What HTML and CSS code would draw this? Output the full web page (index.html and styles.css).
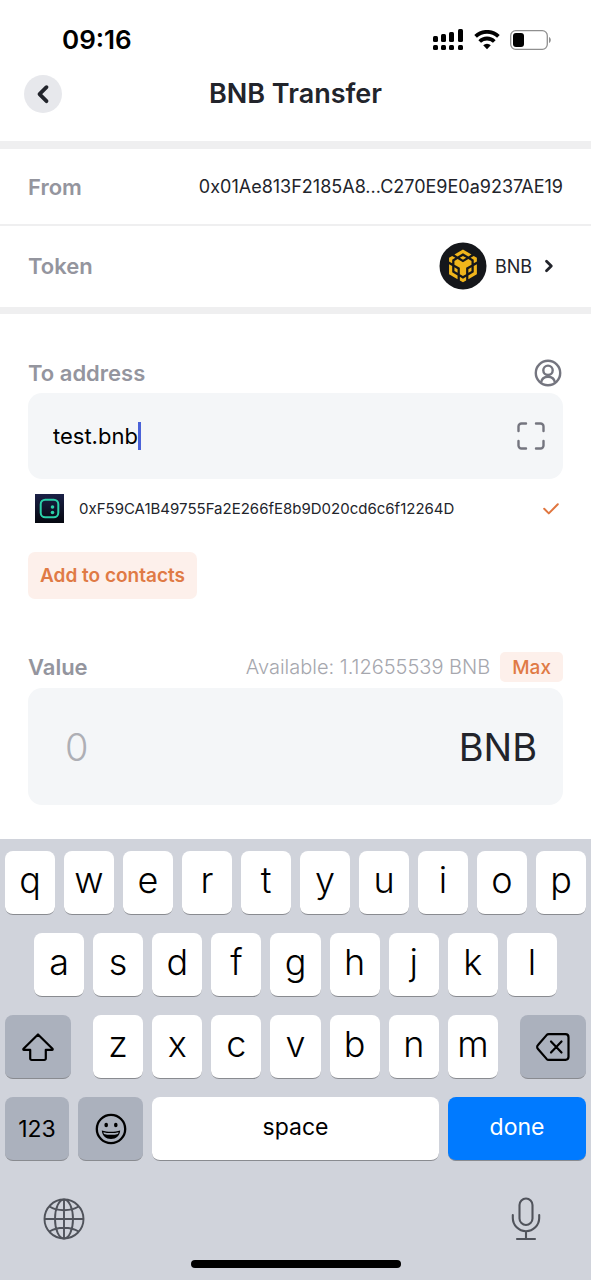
FILE: index.html
```html
<!DOCTYPE html>
<html lang="en">
<head>
<meta charset="utf-8">
<meta name="viewport" content="width=device-width, initial-scale=1">
<title>BNB Transfer</title>
<link rel="stylesheet" href="styles.css">
</head>
<body>
<div class="screen">
  <div class="status">
    <time class="clock">09:16</time>
    <div class="indicators">
      <svg width="31" height="22" viewBox="0 0 31 22" aria-hidden="true">
        <rect x="0" y="7" width="5" height="6" rx="1.5"/><rect x="8" y="5" width="5" height="8" rx="1.5"/><rect x="16" y="3" width="5" height="10" rx="1.5"/><rect x="25" y="0" width="5" height="13" rx="1.5"/>
        <rect x="0" y="16" width="5" height="5" rx="1.5"/><rect x="8" y="16" width="5" height="5" rx="1.5"/><rect x="16" y="16" width="5" height="5" rx="1.5"/><rect x="25" y="16" width="5" height="5" rx="1.5"/>
      </svg>
      <svg width="26" height="20" viewBox="0 0 26 20" aria-hidden="true">
        <path d="M1.600 6.400a16.500 16.500 0 0 1 22.800 0M5.700 11.500a10.400 10.400 0 0 1 14.600 0" fill="none" stroke="#000" stroke-width="3.800"/>
        <path d="M13 19.200l-3.800-3.900a5.400 5.400 0 0 1 7.600 0z"/>
      </svg>
      <svg width="42" height="20" viewBox="0 0 42 20" aria-hidden="true">
        <rect x=".7" y=".7" width="36.600" height="18.600" rx="5" fill="none" stroke="#8f8f8f" stroke-width="1.300"/>
        <rect x="3" y="3" width="11" height="14" rx="3"/>
        <path d="M39 7v6c2.400-1.300 2.400-4.700 0-6z" fill="#8f8f8f"/>
      </svg>
    </div>
  </div>

  <header class="header">
    <button class="back" aria-label="Back">
      <svg width="38" height="38" viewBox="0 0 38 38" aria-hidden="true"><path d="M22.500 12.200L15.500 19.200l7 7" fill="none" stroke="#22242b" stroke-width="3.800" stroke-linecap="round" stroke-linejoin="round"/></svg>
    </button>
    <h1 class="title">BNB Transfer</h1>
  </header>

  <main>
    <section class="details">
      <div class="row row-from">
        <span class="label">From</span>
        <span class="from-address">0x01Ae813F2185A8...C270E9E0a9237AE19</span>
      </div>
      <div class="row row-token">
        <span class="label">Token</span>
        <button class="token">
          <svg width="48" height="48" viewBox="0 0 48 48" aria-hidden="true">
            <circle cx="24" cy="24" r="23.500" fill="#15171b"/>
            <path transform="scale(.0192)" fill="#f0b51b" d="M685.9 1250l.9 330 280.400 165v193.200L522.700 1677.500v-524L685.900 1250zM685.900 920v192.300l-163.300-96.600V823.400l163.300-96.600 164.100 96.600L685.900 920zM1085.700 823.400l163.300-96.600 164.100 96.600-164 96.600zM803.900 1509.600v-193.200l163.300 96.600v192.300zM1085.700 1812.200l163.300 96.600 164.100-96.600v192.300l-164.100 96.600-163.300-96.600zM1645.900 823.400l163.300-96.600 164.100 96.600v192.300l-164.100 96.600V920zM1809.200 1580l.9-330 163.300-96.600v524l-444.500 260.700v-193.200zM1692.100 1509.600l-163.300 95.700V1413l163.300-96.600zM1692.100 986.400l.9 193.200-281.200 165v330.800l-163.300 95.700-163.300-95.700v-330.800l-281.200-165V986.400L968 889.800l279.500 165.800 281.200-165.800 164.100 96.600zM803.900 656.500l443.700-261.600 444.500 261.600-163.300 96.600-281.200-165.800-280.400 165.800z"/>
          </svg>
          <span>BNB</span>
          <svg width="10" height="14" viewBox="0 0 10 14" aria-hidden="true"><path d="M2.500 2.200L7.300 7l-4.800 4.800" fill="none" stroke="#22242b" stroke-width="2.800" stroke-linecap="round" stroke-linejoin="round"/></svg>
        </button>
      </div>
    </section>

    <form class="form">
      <div class="field-head">
        <label class="label" for="to">To address</label>
        <button class="icon-button" type="button" aria-label="Contacts">
          <svg width="28" height="28" viewBox="0 0 28 28" fill="none" stroke="#74757f" stroke-width="2.400" aria-hidden="true"><circle cx="14" cy="14" r="12.200"/><circle cx="14" cy="11.300" r="4.700"/><path d="M7 23.500c.6-3.400 3.300-5.800 7-5.800s6.400 2.400 7 5.800"/></svg>
        </button>
      </div>
      <div class="box box-address">
        <div class="entry">
          <input class="address-input" id="to" type="text" value="test.bnb" size="8" autocomplete="off" spellcheck="false">
          <span class="caret"></span>
        </div>
        <button class="icon-button" type="button" aria-label="Scan code">
          <svg width="28" height="28" viewBox="0 0 28 28" fill="none" stroke="#74757f" stroke-width="2.400" stroke-linecap="round" aria-hidden="true"><path d="M1.500 9V4.500a3 3 0 0 1 3-3H9M19 1.500h4.500a3 3 0 0 1 3 3V9M26.500 19v4.500a3 3 0 0 1-3 3H19M9 26.500H4.500a3 3 0 0 1-3-3V19"/></svg>
        </button>
      </div>
      <div class="resolved">
        <svg width="29" height="29" viewBox="0 0 29 29" aria-hidden="true">
          <defs><linearGradient id="night" x2="0" y2="1"><stop stop-color="#1b2147"/><stop offset="1" stop-color="#05070f"/></linearGradient></defs>
          <rect width="29" height="29" fill="url(#night)"/>
          <rect x="5.700" y="5.700" width="17.600" height="17.600" rx="4.500" fill="none" stroke="#2bd0a8" stroke-width="2"/>
          <circle cx="17.500" cy="13" r="1.800" fill="#2bd0a8"/><circle cx="17.500" cy="18.500" r="1.800" fill="#2bd0a8"/>
        </svg>
        <span class="resolved-address">0xF59CA1B49755Fa2E266fE8b9D020cd6c6f12264D</span>
        <svg width="16" height="12" viewBox="0 0 16 12" aria-hidden="true"><path d="M1.200 5.800l4.600 4.600L14.800 1.300" fill="none" stroke="#e0763f" stroke-width="2" stroke-linecap="round" stroke-linejoin="round"/></svg>
      </div>
      <button class="add" type="button">Add to contacts</button>

      <div class="field-head">
        <label class="label" for="value">Value</label>
        <div class="balance">
          <span class="available">Available: 1.12655539 BNB</span>
          <button class="max" type="button">Max</button>
        </div>
      </div>
      <div class="box box-value">
        <input class="value-input" id="value" type="text" inputmode="decimal" placeholder="0">
        <span class="unit">BNB</span>
      </div>
    </form>
  </main>

  <div class="keyboard">
    <div class="keys keys-top">
      <button class="key">q</button><button class="key">w</button><button class="key">e</button><button class="key">r</button><button class="key">t</button><button class="key">y</button><button class="key">u</button><button class="key">i</button><button class="key">o</button><button class="key">p</button>
    </div>
    <div class="keys keys-home">
      <button class="key">a</button><button class="key">s</button><button class="key">d</button><button class="key">f</button><button class="key">g</button><button class="key">h</button><button class="key">j</button><button class="key">k</button><button class="key">l</button>
    </div>
    <div class="keys keys-lower">
      <button class="key key-dark" aria-label="Shift">
        <svg width="34" height="30" viewBox="0 0 34 30" aria-hidden="true"><path d="M17 2.500L31.500 16.800c.4.500.2 1-.4 1h-6.300v8.700a1.500 1.500 0 0 1-1.500 1.500H10.700a1.500 1.500 0 0 1-1.500-1.500v-8.700H2.900c-.6 0-.8-.5-.4-1z" fill="none" stroke="#000" stroke-width="2.200" stroke-linejoin="round"/></svg>
      </button>
      <div class="keys keys-letters">
        <button class="key">z</button><button class="key">x</button><button class="key">c</button><button class="key">v</button><button class="key">b</button><button class="key">n</button><button class="key">m</button>
      </div>
      <button class="key key-dark" aria-label="Delete">
        <svg width="34" height="28" viewBox="0 0 34 28" fill="none" stroke="#000" stroke-width="2.200" stroke-linejoin="round" stroke-linecap="round" aria-hidden="true"><path d="M12.800 1.200h16.700a3 3 0 0 1 3 3v19.600a3 3 0 0 1-3 3H12.800a3 3 0 0 1-2.200-.9L2 16a2.800 2.800 0 0 1 0-4l8.600-9.900a3 3 0 0 1 2.200-.9zM15 8.500L25.500 19.500M25.500 8.500L15 19.500"/></svg>
      </button>
    </div>
    <div class="keys keys-bottom">
      <button class="key key-dark key-word">123</button>
      <button class="key key-dark" aria-label="Emoji">
        <svg width="32" height="32" viewBox="0 0 32 32" aria-hidden="true"><circle cx="16" cy="16" r="14.200" fill="none" stroke="#000" stroke-width="2.300"/><ellipse cx="11.200" cy="12" rx="1.800" ry="2.300"/><ellipse cx="20.800" cy="12" rx="1.800" ry="2.300"/><path d="M6.800 17.500c2.800.9 6 1.300 9.200 1.300s6.400-.4 9.200-1.300c-.3 5-4.200 8.500-9.200 8.500s-8.900-3.500-9.200-8.500z"/><path d="M8.300 19.200c2.300.6 5 .9 7.700.9s5.400-.3 7.700-.9l-.7 1.700c-2 .6-4.400.9-7 .9s-5-.3-7-.9z" fill="#abb1bd"/></svg>
      </button>
      <button class="key key-word">space</button>
      <button class="key key-word key-done">done</button>
    </div>
    <div class="tools">
      <button class="icon-button" aria-label="Next keyboard">
        <svg width="42" height="42" viewBox="0 0 42 42" fill="none" stroke="#50535b" stroke-width="1.900" aria-hidden="true"><circle cx="21" cy="21" r="19.500"/><ellipse cx="21" cy="21" rx="9" ry="19.500"/><path d="M21 1.500v39M1.500 21h39M6.500 8.500c4 2.600 9 3.700 14.500 3.700s10.500-1.100 14.500-3.700M6.500 33.500c4-2.600 9-3.700 14.500-3.700s10.500 1.100 14.500 3.700"/></svg>
      </button>
      <button class="icon-button" aria-label="Dictate">
        <svg width="30" height="44" viewBox="0 0 30 44" fill="none" stroke="#50535b" stroke-width="2.100" stroke-linecap="round" aria-hidden="true"><rect x="8.500" y="1.500" width="13" height="26.500" rx="6.500"/><path d="M1.800 18v3a13.200 13.200 0 0 0 26.400 0v-3M15 34.300V42M6 42h18"/></svg>
      </button>
    </div>
    <div class="home-bar"></div>
  </div>
</div>
</body>
</html>
```

FILE: styles.css
```css
* {
  box-sizing: border-box;
}

body {
  margin: 0;
  background: #fff;
  color: #22242b;
  font-family: Inter, "Liberation Sans", sans-serif;
}

button,
input {
  padding: 0;
  border: 0;
  border-radius: 0;
  background: none;
  color: inherit;
  font: inherit;
  outline: none;
}

svg {
  display: block;
  flex: none;
}

.screen {
  display: flex;
  flex-direction: column;
  min-height: 100vh;
}

.status {
  display: flex;
  justify-content: space-between;
  align-items: center;
  height: 75px;
  padding: 4px 39px 0 62px;
  color: #000;
}

.clock {
  font-size: 26px;
  font-weight: 600;
}

.indicators {
  display: flex;
  align-items: center;
  gap: 10px;
}

.header {
  display: grid;
  grid-template-columns: 38px 1fr 38px;
  align-items: center;
  height: 66px;
  padding: 0 24px 28px;
}

.back {
  width: 38px;
  height: 38px;
  border-radius: 50%;
  background: #e7e8ec;
}

.title {
  margin: 0;
  font-size: 27px;
  font-weight: 600;
  line-height: 38px;
  text-align: center;
}

.details {
  border-top: 8px solid #efeff0;
  border-bottom: 7px solid #efeff0;
}

.row {
  display: flex;
  justify-content: space-between;
  align-items: center;
  padding: 0 28px;
}

.row-from {
  height: 77px;
  border-bottom: 2px solid #efeff0;
}

.row-token {
  height: 81px;
  padding-bottom: 1px;
}

.label {
  color: #94959e;
  font-size: 22px;
  font-weight: 600;
}

.from-address {
  font-size: 18px;
}

.token {
  display: flex;
  align-items: center;
  gap: 8px;
  padding-right: 9px;
  font-size: 18px;
}

.token span {
  margin-right: 4px;
}

.form {
  padding: 44px 28px 34px;
}

.field-head {
  display: flex;
  justify-content: space-between;
  align-items: center;
  height: 30px;
}

.field-head .icon-button {
  margin-right: 1px;
}

.box {
  display: flex;
  justify-content: space-between;
  align-items: center;
  border-radius: 14px;
  background: #f4f6f8;
}

.box-address {
  height: 86px;
  margin-top: 5px;
  padding: 0 18px 0 25px;
}

.entry {
  display: flex;
  align-items: center;
}

.address-input {
  field-sizing: content;
  color: #000;
  font-size: 22px;
}

.caret {
  width: 3px;
  height: 28px;
  background: #4a62d8;
}

.resolved {
  display: flex;
  align-items: center;
  margin-top: 15px;
  padding: 0 4px 0 7px;
}

.resolved-address {
  flex: 1;
  padding-left: 15px;
  font-size: 15px;
}

.add {
  height: 47px;
  margin: 29px 0 53px;
  padding: 0 12px;
  border-radius: 7px;
  background: #fdf0eb;
  color: #e07a45;
  font-size: 19px;
  font-weight: 600;
}

.balance {
  display: flex;
  align-items: center;
  gap: 10px;
}

.available {
  color: #a6a7ae;
  font-size: 20px;
  font-weight: 300;
}

.max {
  height: 30px;
  padding: 0 12px;
  border-radius: 5px;
  background: #fdf0eb;
  color: #e07a45;
  font-size: 19px;
  font-weight: 500;
}

.box-value {
  height: 117px;
  margin-top: 6px;
  padding: 0 26px 0 37px;
  font-size: 38px;
}

.value-input {
  flex: 1;
  min-width: 0;
  font-weight: 300;
}

.value-input::placeholder {
  color: #aeafb5;
}

.keyboard {
  display: flex;
  flex: 1;
  flex-direction: column;
  gap: 18px;
  padding: 12px 5px;
  background: #d0d3db;
}

.keys {
  display: grid;
  gap: 9px;
}

.keys-top {
  grid-template-columns: repeat(10, 1fr);
}

.keys-home {
  grid-template-columns: repeat(9, 1fr);
  padding: 0 29px;
}

.keys-lower {
  grid-template-columns: 66px 1fr 66px;
  gap: 22px;
}

.keys-letters {
  grid-template-columns: repeat(7, 1fr);
  gap: 9px;
}

.keys-bottom {
  grid-template-columns: 64px 65px 1fr 138px;
}

.key {
  display: flex;
  justify-content: center;
  align-items: center;
  height: 64px;
  padding-bottom: 6px;
  border-bottom: 1px solid #898b90;
  border-radius: 8px;
  background: #fff;
  color: #000;
  font-size: 36px;
  font-weight: 300;
}

.key-word {
  padding-bottom: 4px;
  font-size: 23px;
  font-weight: 400;
}

.key-dark {
  padding-bottom: 0;
  background: #abb1bd;
}

.key-done {
  background: #007aff;
  color: #fff;
}

.tools {
  display: flex;
  justify-content: space-between;
  align-items: center;
  padding: 18px 45px 0 38px;
}

.home-bar {
  width: 210px;
  height: 8px;
  margin: auto auto 0;
  border-radius: 4px;
  background: #000;
}

@media (max-height: 1100px) {
  .home-bar {
    margin-top: 0;
  }
}
```
